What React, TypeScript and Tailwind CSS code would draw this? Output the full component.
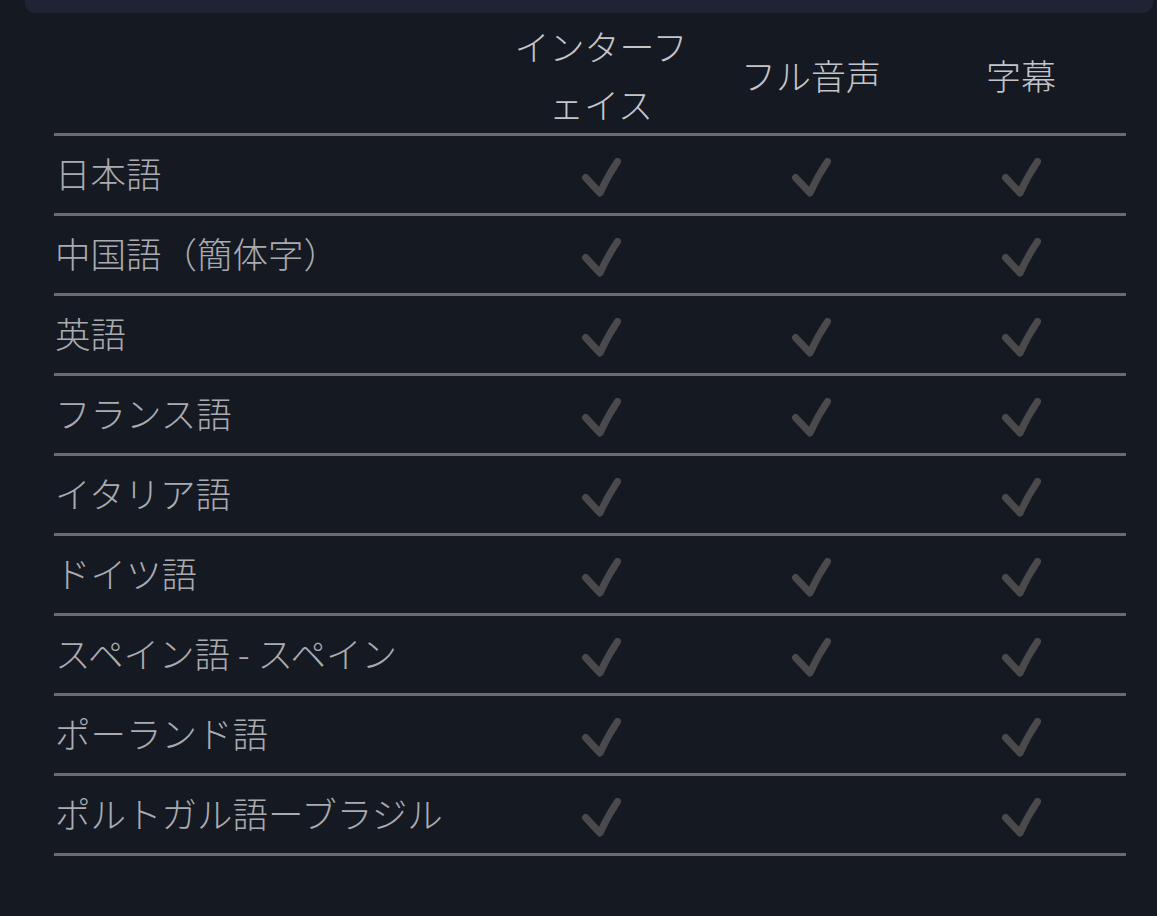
import React from "react";

const rows: [string, boolean, boolean, boolean][] = [
  ["日本語", true, true, true],
  ["中国語（簡体字）", true, false, true],
  ["英語", true, true, true],
  ["フランス語", true, true, true],
  ["イタリア語", true, false, true],
  ["ドイツ語", true, true, true],
  ["スペイン語 - スペイン", true, true, true],
  ["ポーランド語", true, false, true],
  ["ポルトガル語ーブラジル", true, false, true],
];

function Check() {
  return (
    <svg width="40" height="40" viewBox="0 0 40 40" className="inline-block">
      <path
        d="M4.5 19.5 L19 35 Q26 19 36.5 3.5"
        fill="none"
        stroke="#4a4a4d"
        strokeWidth="7"
        strokeLinecap="round"
        strokeLinejoin="round"
      />
    </svg>
  );
}

export default function App() {
  return (
    <div
      className="w-[1157px] h-[916px] bg-[#151922] overflow-hidden"
      style={{ fontFamily: '"Noto Sans CJK JP", "Noto Sans", sans-serif' }}
    >
      <div className="mx-[25px] w-[1128px] h-[13px] bg-[#1f2435] rounded-b-[10px]" />
      <table className="ml-[54px] mt-[4px] w-[1072px] border-collapse table-fixed">
        <colgroup>
          <col className="w-[442px]" />
          <col className="w-[210px]" />
          <col className="w-[210px]" />
          <col className="w-[210px]" />
        </colgroup>
        <thead>
          <tr className="border-b-[3px] border-[#6a6a70]">
            <th className="font-normal" />
            {["インターフェイス", "フル音声", "字幕"].map((h) => (
              <th
                key={h}
                className="px-[14px] text-[35px] leading-[58px] font-light text-[#c3c5ca] text-center align-middle"
              >
                {h}
              </th>
            ))}
          </tr>
        </thead>
        <tbody>
          {rows.map(([name, a, b, c]) => (
            <tr key={name} className="border-b-[3px] border-[#6a6a70] h-[80px]">
              <td className="pl-[1px] pb-[4px] text-[35.5px] font-light text-[#a9abb1] align-middle whitespace-nowrap">
                {name}
              </td>
              {[a, b, c].map((v, i) => (
                <td key={i} className="text-center align-middle pt-[6px]">
                  {v ? <Check /> : null}
                </td>
              ))}
            </tr>
          ))}
        </tbody>
      </table>
    </div>
  );
}
